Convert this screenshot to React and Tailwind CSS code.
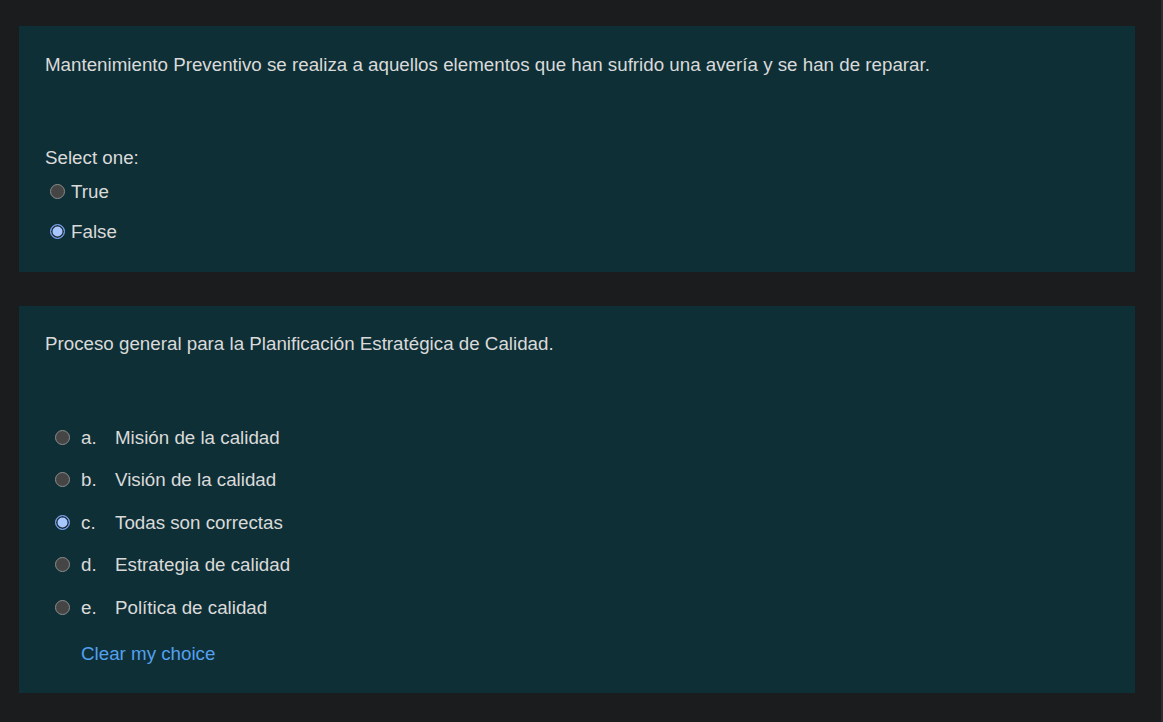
import React from 'react';

const Radio = ({ checked }) =>
    checked ? (
        <span className="inline-block w-[15px] h-[15px] shrink-0 rounded-full border border-[#6f9ef0] bg-[#a6c8ff] shadow-[inset_0_0_0_1.5px_#1f2b38]" />
    ) : (
        <span className="inline-block w-[15px] h-[15px] shrink-0 rounded-full border border-[#8c8c8c] bg-[#454545]" />
    );

const choices = [
    { letter: 'a.', text: 'Misión de la calidad' },
    { letter: 'b.', text: 'Visión de la calidad' },
    { letter: 'c.', text: 'Todas son correctas', checked: true },
    { letter: 'd.', text: 'Estrategia de calidad' },
    { letter: 'e.', text: 'Política de calidad' },
];

const App = () => {
    return (
        <div className="min-h-[722px] bg-[#1b1c1e] pt-[26px] pl-[19px] pr-[26px] pb-[29px] text-[18.75px] leading-[27px] text-[#dadada] font-['Liberation_Sans',Arial,sans-serif] border-r-2 border-[#2c2d30]">
            <div className="bg-[#0f2f36] pl-[26px] pt-[25px] pb-[21px]">
                <p>Mantenimiento Preventivo se realiza a aquellos elementos que han sufrido una avería y se han de reparar.</p>
                <div className="mt-[66px]">Select one:</div>
                <label className="flex items-center h-10 pl-[5px] gap-[6px]">
                    <Radio />
                    <span>True</span>
                </label>
                <label className="flex items-center h-10 pl-[5px] gap-[6px]">
                    <Radio checked />
                    <span>False</span>
                </label>
            </div>

            <div className="bg-[#0f2f36] mt-[34px] pl-[26px] pt-[24px] pb-[26px]">
                <p>Proceso general para la Planificación Estratégica de Calidad.</p>
                <div className="mt-[59px]">
                    {choices.map((c) => (
                        <label key={c.letter} className="flex items-center h-[42.5px] pl-[10px]">
                            <Radio checked={c.checked} />
                            <span className="ml-[11px] w-[34px]">{c.letter}</span>
                            <span>{c.text}</span>
                        </label>
                    ))}
                </div>
                <div className="pl-[36px] mt-[11px] text-[#53a0ee]">Clear my choice</div>
            </div>
        </div>
    );
};

export default App;
